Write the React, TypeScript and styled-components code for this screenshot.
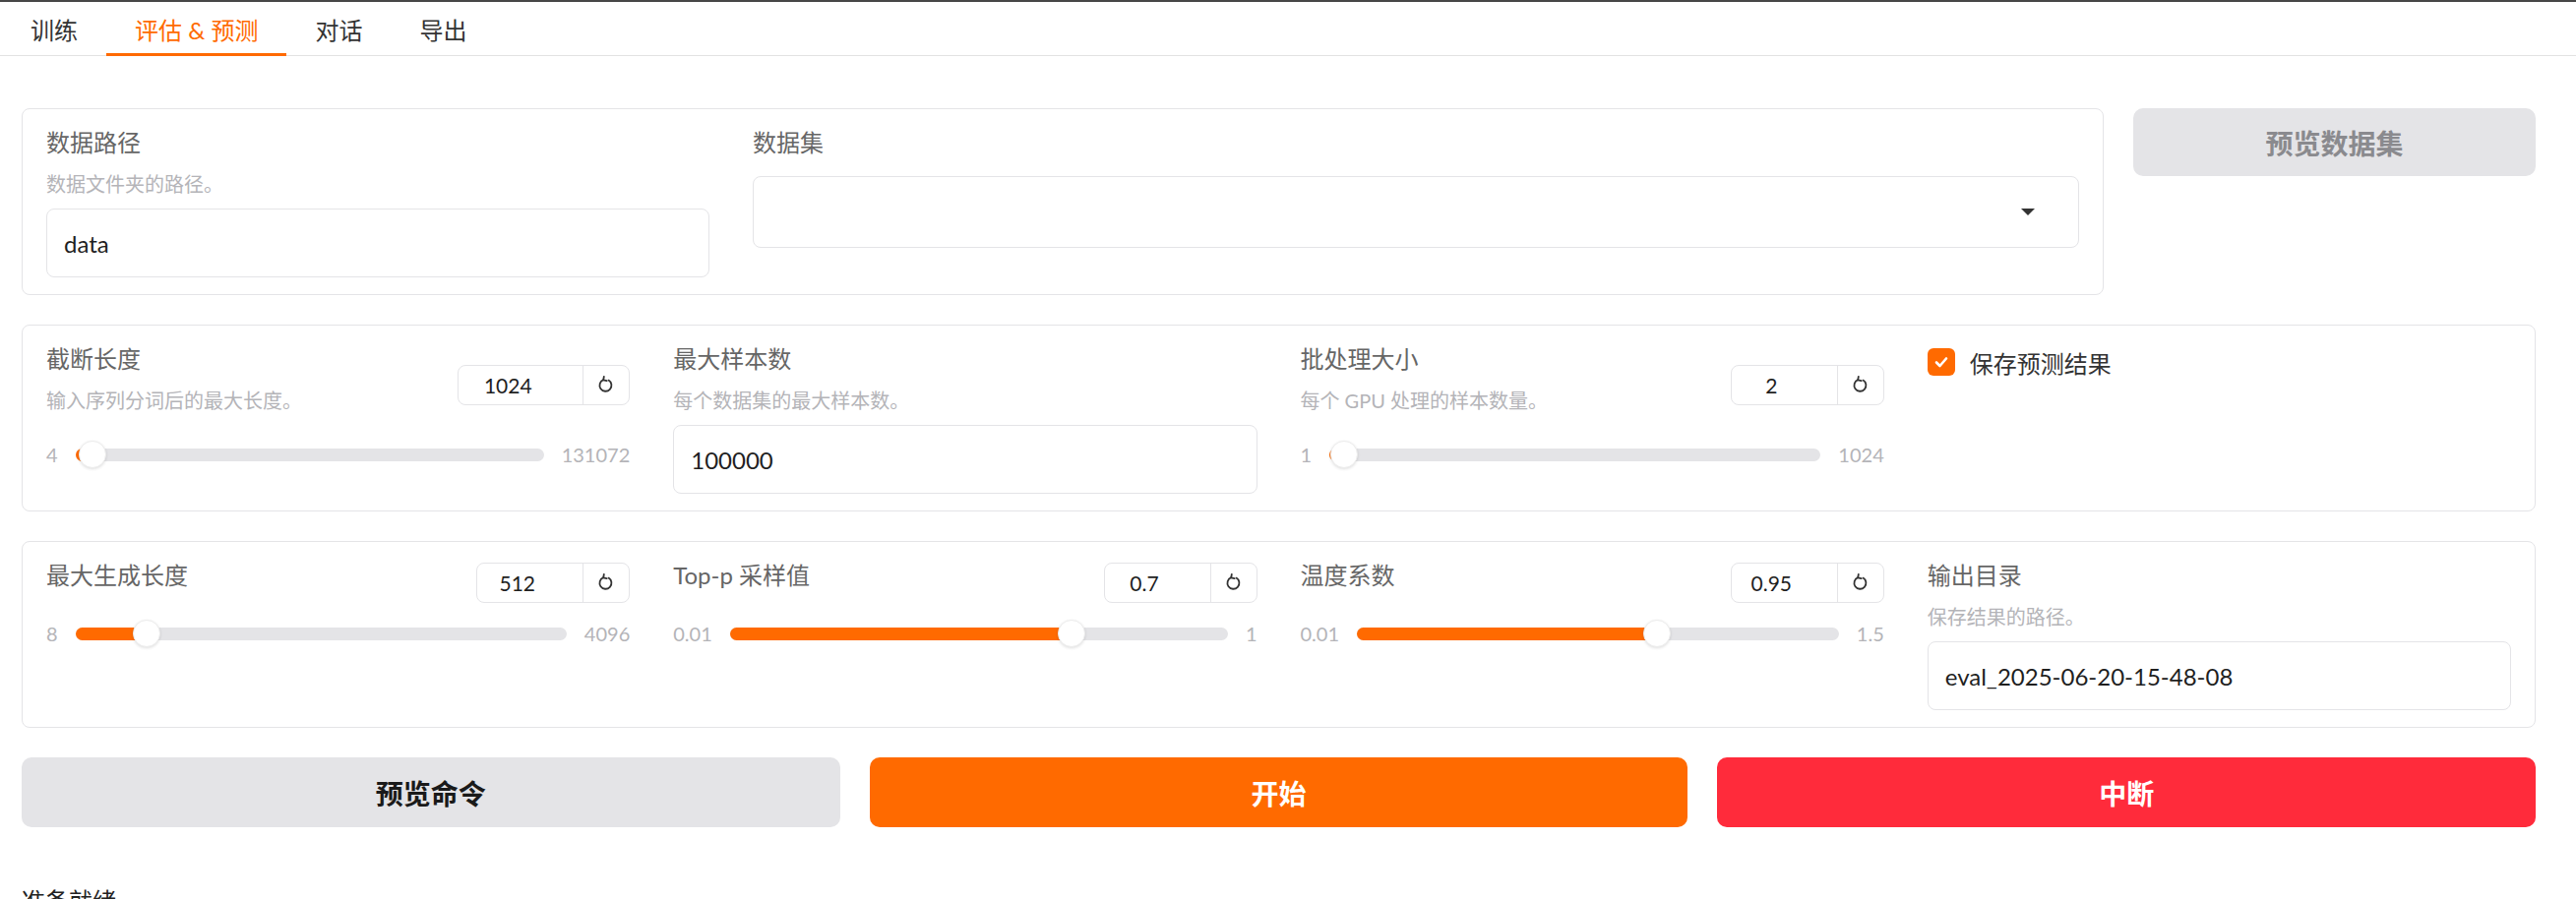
import React from "react";
import styled, { createGlobalStyle } from "styled-components";

const GlobalStyle = createGlobalStyle`
  html, body {
    margin: 0;
    padding: 0;
    background: #ffffff;
  }
  body {
    font-family: "Lato", "Noto Sans CJK SC", "Noto Sans", sans-serif;
    color: #222;
  }
  * { box-sizing: border-box; }
`;

const ORANGE = "#ff6a00";
const BORDER = "#e4e4e7";

const Page = styled.div`
  width: 2618px;
  min-height: 914px;
  border-top: 2px solid #474747;
`;

const TabBar = styled.div`
  display: flex;
  padding-left: 2px;
  border-bottom: 1px solid #e2e2e2;
`;

const Tab = styled.div<{ $active?: boolean }>`
  position: relative;
  height: 54px;
  display: flex;
  align-items: center;
  padding: 0 29px;
  font-size: 24px;
  color: ${(p) => (p.$active ? ORANGE : "#333")};
  &::after {
    content: "";
    display: ${(p) => (p.$active ? "block" : "none")};
    position: absolute;
    left: 0;
    right: 0;
    bottom: -1px;
    height: 3px;
    background: ${ORANGE};
  }
`;

const Content = styled.div`
  padding: 53px 41px 0 22px;
  display: flex;
  flex-direction: column;
  gap: 30px;
`;

const TopRow = styled.div`
  display: grid;
  grid-template-columns: 1fr 409px;
  gap: 30px;
  align-items: start;
`;

const Panel = styled.div<{ $cols: string }>`
  border: 1px solid ${BORDER};
  border-radius: 8px;
  background: #fff;
  padding: 19px 24px 17px 24px;
  display: grid;
  grid-template-columns: ${(p) => p.$cols};
  gap: 44px;
  align-items: start;
`;

const Field = styled.div`
  display: flex;
  flex-direction: column;
  min-width: 0;
`;

const FieldLabel = styled.div<{ $gap?: number }>`
  font-size: 24px;
  line-height: 30px;
  color: #666;
  margin-bottom: ${(p) => p.$gap ?? 0}px;
  white-space: nowrap;
`;

const Info = styled.div`
  font-size: 20px;
  line-height: 28px;
  color: #b4b4b8;
  margin-top: 13px;
  margin-bottom: 11px;
  white-space: nowrap;
`;

const TextInput = styled.div`
  height: 70px;
  border: 1px solid ${BORDER};
  border-radius: 8px;
  display: flex;
  align-items: center;
  padding: 0 17px;
  font-size: 24px;
  color: #1f1f1f;
`;

const Dropdown = styled.div`
  height: 73px;
  border: 1px solid ${BORDER};
  border-radius: 8px;
  display: flex;
  align-items: center;
  justify-content: flex-end;
  padding-right: 44px;
`;

const Caret = styled.div`
  width: 0;
  height: 0;
  border-left: 7px solid transparent;
  border-right: 7px solid transparent;
  border-top: 7px solid #333;
`;

const SideButton = styled.div`
  height: 69px;
  border-radius: 10px;
  background: #e4e4e7;
  color: #8a8a8e;
  font-size: 28px;
  font-weight: 700;
  display: flex;
  align-items: center;
  justify-content: center;
`;

const SliderHead = styled.div`
  display: flex;
  justify-content: space-between;
  align-items: center;
`;

const HeadText = styled.div`
  display: flex;
  flex-direction: column;
`;

const NumberBox = styled.div`
  display: flex;
  height: 41px;
  border: 1px solid ${BORDER};
  border-radius: 8px;
  flex-shrink: 0;
  overflow: hidden;
`;

const NumberValue = styled.div<{ $w: number }>`
  width: ${(p) => p.$w}px;
  display: flex;
  align-items: center;
  justify-content: center;
  padding-right: 26px;
  font-size: 21px;
  color: #1f1f1f;
`;

const ResetButton = styled.div`
  width: 47px;
  border-left: 1px solid ${BORDER};
  display: flex;
  align-items: center;
  justify-content: center;
  color: #333;
`;

const SliderRow = styled.div`
  display: flex;
  align-items: center;
  gap: 18px;
  height: 28px;
  margin-top: 16px;
`;

const RangeLabel = styled.div`
  font-size: 20px;
  color: #b4b4b8;
  white-space: nowrap;
`;

const Track = styled.div`
  position: relative;
  flex: 1;
  height: 13px;
  border-radius: 7px;
  background: #e4e4e7;
`;

const Fill = styled.div`
  position: absolute;
  left: 0;
  top: 0;
  bottom: 0;
  border-radius: 7px;
  background: ${ORANGE};
`;

const Thumb = styled.div`
  position: absolute;
  top: 50%;
  width: 28px;
  height: 28px;
  margin-top: -14px;
  border-radius: 50%;
  background: #fff;
  border: 1px solid #ececec;
  box-shadow: 0 1px 3px rgba(0, 0, 0, 0.12);
`;

const CheckRow = styled.div`
  display: flex;
  align-items: center;
  gap: 15px;
  height: 30px;
  margin-top: 3px;
  font-size: 24px;
  color: #333;
`;

const CheckBox = styled.div`
  width: 28px;
  height: 28px;
  border-radius: 6px;
  background: ${ORANGE};
  display: flex;
  align-items: center;
  justify-content: center;
`;

const ButtonRow = styled.div`
  display: grid;
  grid-template-columns: repeat(3, 1fr);
  gap: 30px;
`;

const ActionButton = styled.div<{ $variant: "secondary" | "primary" | "stop" }>`
  height: 71px;
  border-radius: 10px;
  display: flex;
  align-items: center;
  justify-content: center;
  font-size: 28px;
  font-weight: 700;
  background: ${(p) =>
    p.$variant === "primary" ? ORANGE : p.$variant === "stop" ? "#ff2b3b" : "#e4e4e7"};
  color: ${(p) => (p.$variant === "secondary" ? "#1a1a1a" : "#ffffff")};
`;

const StatusWrap = styled.div`
  padding: 0 41px 0 22px;
`;

const Status = styled.div`
  margin-top: 58px;
  font-size: 24px;
  font-weight: 400;
  line-height: 34px;
  color: #222;
`;

function ResetIcon() {
  return (
    <svg width="18" height="20" viewBox="0 0 18 20">
      <path
        d="M6.2 5.2 A6 6 0 1 0 11.5 5.6"
        fill="none"
        stroke="#333"
        strokeWidth="1.8"
        strokeLinecap="round"
      />
      <path d="M6.8 1.8 L6.2 5.4 L9.6 6.2" fill="none" stroke="#333" strokeWidth="1.8" strokeLinecap="round" strokeLinejoin="round" />
    </svg>
  );
}

type SliderProps = {
  label: string;
  info?: string;
  min: number;
  max: number;
  value: number;
  minText: string;
  maxText: string;
  valueText: string;
  numW?: number;
};

function SliderField({ label, info, min, max, value, minText, maxText, valueText, numW = 107 }: SliderProps) {
  const frac = (value - min) / (max - min);
  return (
    <Field>
      <SliderHead>
        <HeadText>
          <FieldLabel $gap={info ? 0 : 14}>{label}</FieldLabel>
          {info && <Info>{info}</Info>}
        </HeadText>
        <NumberBox>
          <NumberValue $w={numW}>{valueText}</NumberValue>
          <ResetButton>
            <ResetIcon />
          </ResetButton>
        </NumberBox>
      </SliderHead>
      <SliderRow>
        <RangeLabel>{minText}</RangeLabel>
        <Track>
          <Fill style={{ width: `calc(${frac} * (100% - 28px) + 14px)` }} />
          <Thumb style={{ left: `calc(${frac} * (100% - 28px))` }} />
        </Track>
        <RangeLabel>{maxText}</RangeLabel>
      </SliderRow>
    </Field>
  );
}

export default function App() {
  return (
    <>
      <GlobalStyle />
      <Page>
        <TabBar>
          <Tab>训练</Tab>
          <Tab $active>评估 &amp; 预测</Tab>
          <Tab>对话</Tab>
          <Tab>导出</Tab>
        </TabBar>
        <Content>
          <TopRow>
            <Panel $cols="1fr 2fr">
              <Field>
                <FieldLabel>数据路径</FieldLabel>
                <Info>数据文件夹的路径。</Info>
                <TextInput>data</TextInput>
              </Field>
              <Field>
                <FieldLabel $gap={19}>数据集</FieldLabel>
                <Dropdown>
                  <Caret />
                </Dropdown>
              </Field>
            </Panel>
            <SideButton>预览数据集</SideButton>
          </TopRow>

          <Panel $cols="repeat(4, 1fr)">
            <SliderField
              label="截断长度"
              info="输入序列分词后的最大长度。"
              min={4}
              max={131072}
              value={1024}
              minText="4"
              maxText="131072"
              valueText="1024"
              numW={126}
            />
            <Field>
              <FieldLabel>最大样本数</FieldLabel>
              <Info>每个数据集的最大样本数。</Info>
              <TextInput>100000</TextInput>
            </Field>
            <SliderField
              label="批处理大小"
              info="每个 GPU 处理的样本数量。"
              min={1}
              max={1024}
              value={2}
              minText="1"
              maxText="1024"
              valueText="2"
            />
            <Field>
              <CheckRow>
                <CheckBox>
                  <svg width="18" height="18" viewBox="0 0 18 18">
                    <path d="M4 9.5 L7.5 13 L14 5.5" fill="none" stroke="#fff" strokeWidth="2.6" strokeLinecap="round" strokeLinejoin="round" />
                  </svg>
                </CheckBox>
                保存预测结果
              </CheckRow>
            </Field>
          </Panel>

          <Panel $cols="repeat(4, 1fr)">
            <SliderField
              label="最大生成长度"
              min={8}
              max={4096}
              value={512}
              minText="8"
              maxText="4096"
              valueText="512"
            />
            <SliderField
              label="Top-p 采样值"
              min={0.01}
              max={1}
              value={0.7}
              minText="0.01"
              maxText="1"
              valueText="0.7"
            />
            <SliderField
              label="温度系数"
              min={0.01}
              max={1.5}
              value={0.95}
              minText="0.01"
              maxText="1.5"
              valueText="0.95"
            />
            <Field>
              <FieldLabel>输出目录</FieldLabel>
              <Info>保存结果的路径。</Info>
              <TextInput>eval_2025-06-20-15-48-08</TextInput>
            </Field>
          </Panel>

          <ButtonRow>
            <ActionButton $variant="secondary">预览命令</ActionButton>
            <ActionButton $variant="primary">开始</ActionButton>
            <ActionButton $variant="stop">中断</ActionButton>
          </ButtonRow>
        </Content>
        <StatusWrap>
          <Status>准备就绪</Status>
        </StatusWrap>
      </Page>
    </>
  );
}
